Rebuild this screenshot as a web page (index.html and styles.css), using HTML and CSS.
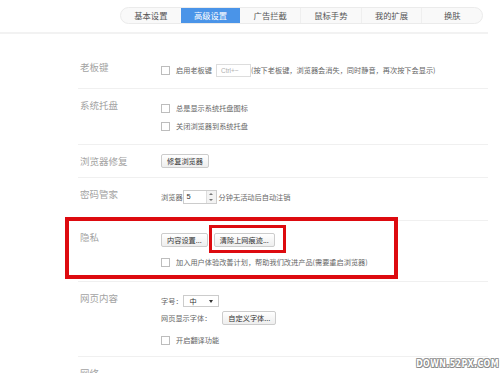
FILE: index.html
```html
<!DOCTYPE html>
<html lang="zh-CN">
<head>
    <meta charset="UTF-8">
    <meta name="viewport" content="width=device-width, initial-scale=1.0">
    <title>高级设置</title>
    <link rel="stylesheet" href="styles.css">
</head>
<body>
    <div class="header">
        <div class="tabs">
            <a href="#" class="tab">基本设置</a>
            <a href="#" class="tab active">高级设置</a>
            <a href="#" class="tab">广告拦截</a>
            <a href="#" class="tab">鼠标手势</a>
            <a href="#" class="tab">我的扩展</a>
            <a href="#" class="tab">换肤</a>
        </div>
    </div>

    <!-- 老板键 -->
    <div class="row row-first">
        <div class="label">老板键</div>
        <div class="content">
            <div class="line"><span class="check"></span>启用老板键<span class="hotkey">Ctrl+~</span>(按下老板键，浏览器会消失，同时静音，再次按下会显示)</div>
        </div>
    </div>

    <!-- 系统托盘 -->
    <div class="row row-tray">
        <div class="label">系统托盘</div>
        <div class="content">
            <div class="line"><span class="check"></span>总是显示系统托盘图标</div>
            <div class="line"><span class="check"></span>关闭浏览器到系统托盘</div>
        </div>
    </div>

    <!-- 浏览器修复 -->
    <div class="row">
        <div class="label">浏览器修复</div>
        <div class="content flush">
            <div class="line"><a href="#" class="button">修复浏览器</a></div>
        </div>
    </div>

    <!-- 密码管家 -->
    <div class="row row-pass">
        <div class="label">密码管家</div>
        <div class="content">
            <div class="line">浏览器<span class="spin"><span class="spin-value">5</span><span class="spin-arrows"><i class="up"></i><i class="down"></i></span></span><span class="after-spin">分钟无活动后自动注销</span></div>
        </div>
    </div>

    <!-- 隐私 -->
    <div class="row row-privacy">
        <div class="mark"></div>
        <div class="label">隐私</div>
        <div class="content">
            <div class="line">
                <a href="#" class="button">内容设置...</a>
                <span class="marked"><a href="#" class="button">清除上网痕迹...</a><span class="mark-inner"></span></span>
            </div>
            <div class="line spaced"><span class="check"></span>加入用户体验改善计划，帮助我们改进产品(需要重启浏览器)</div>
        </div>
    </div>

    <!-- 网页内容 -->
    <div class="row">
        <div class="label">网页内容</div>
        <div class="content">
            <div class="line">字号：<span class="select">中<i class="caret"></i></span></div>
            <div class="line tight">网页显示字体：<a href="#" class="button font-button">自定义字体...</a></div>
            <div class="line spaced"><span class="check"></span>开启翻译功能</div>
        </div>
    </div>

    <div class="row">
        <div class="label">网络</div>
        <div class="content"></div>
    </div>

    <div class="watermark">DOWN.52PX.COM</div>
</body>
</html>
```

FILE: styles.css
```css
html, body {
    margin: 0;
    padding: 0;
}

body {
    font-family: "Noto Sans CJK SC", "Noto Sans", sans-serif;
    background-color: #ffffff;
    color: #666666;
    height: 373px;
    overflow: hidden;
    position: relative;
}

a {
    text-decoration: none;
}

.header {
    width: 488px;
    height: 34px;
    box-sizing: border-box;
    padding: 7px 0 0 120px;
    border-bottom: 2px solid #f2f2f2;
}

.tabs {
    display: flex;
    width: 363px;
    height: 17px;
    box-sizing: border-box;
    border: 1px solid #ebebeb;
    border-radius: 9px;
    background-color: #f9f9f9;
    overflow: hidden;
}

.tab {
    flex: 1;
    font-size: 8.3px;
    line-height: 15px;
    text-align: center;
    color: #555555;
    border-left: 1px solid #efefef;
}

.tab:first-child {
    border-left: none;
}

.tab.active {
    background-color: #4a94e8;
    color: #ffffff;
    border-left: none;
}

.tab.active + .tab {
    border-left: none;
}

.row {
    display: flex;
    margin-left: 78px;
    width: 410px;
    padding: 9px 0;
    border-bottom: 1px solid #f0f0f0;
    position: relative;
}

.row-first {
    padding: 26px 0 11px;
}

.row-tray {
    padding-bottom: 11px;
}

.row-pass {
    padding-bottom: 16px;
}

.row-privacy {
    padding-bottom: 12px;
}

.label {
    width: 81px;
    padding-left: 2px;
    flex-shrink: 0;
    font-size: 9.5px;
    line-height: 14px;
    color: #a3a3a3;
}

.content {
    display: flex;
    flex-direction: column;
    gap: 4px;
    padding-top: 3px;
}

.content.flush {
    padding-top: 0;
}

.line {
    display: flex;
    align-items: center;
    height: 14px;
    font-size: 7.2px;
    white-space: nowrap;
    color: #666666;
}

.line.spaced {
    margin-top: 4px;
}

.line.tight {
    margin-top: -1px;
}

.check {
    width: 9px;
    height: 9px;
    box-sizing: border-box;
    border: 1px solid #bdbdbd;
    background-color: #ffffff;
    margin-right: 6px;
    flex-shrink: 0;
}

.hotkey {
    width: 35px;
    height: 13px;
    box-sizing: border-box;
    margin-left: 4px;
    padding-left: 4px;
    border: 1px solid #dddddd;
    font-family: "Liberation Sans", sans-serif;
    font-size: 6.5px;
    line-height: 11px;
    color: #b0b0b0;
}

.button {
    display: inline-block;
    height: 14px;
    box-sizing: border-box;
    padding: 0 5px;
    border: 1px solid #cccccc;
    border-radius: 2px;
    background: linear-gradient(#ffffff, #eeeeee);
    font-size: 7.2px;
    line-height: 12px;
    color: #333333;
}

.marked {
    position: relative;
    margin-left: 6px;
}

.font-button {
    margin-left: 11px;
}

.spin {
    display: flex;
    width: 34px;
    height: 14px;
    box-sizing: border-box;
    border: 1px solid #cccccc;
    background-color: #ffffff;
}

.spin-value {
    flex: 1;
    padding-left: 3px;
    font-family: "Liberation Sans", sans-serif;
    font-size: 7.5px;
    line-height: 12px;
    color: #333333;
}

.spin-arrows {
    width: 9px;
    display: flex;
    flex-direction: column;
    border-left: 1px solid #dddddd;
    background-color: #f3f3f3;
}

.spin-arrows i {
    flex: 1;
    display: flex;
    align-items: center;
    justify-content: center;
}

.spin-arrows .up::before {
    content: "";
    border: 2px solid transparent;
    border-bottom: 2px solid #777777;
    border-top: none;
}

.spin-arrows .down::before {
    content: "";
    border: 2px solid transparent;
    border-top: 2px solid #777777;
    border-bottom: none;
}

.after-spin {
    margin-left: 2px;
}

.select {
    position: relative;
    width: 36px;
    height: 12px;
    box-sizing: border-box;
    margin-left: 0;
    padding-left: 6px;
    border: 1px solid #cccccc;
    background-color: #ffffff;
    font-size: 7.2px;
    line-height: 10px;
    color: #333333;
}

.caret {
    position: absolute;
    right: 5px;
    top: 4px;
    border: 2.5px solid transparent;
    border-top: 3px solid #333333;
    border-bottom: none;
}

/* red annotation boxes */
.mark {
    position: absolute;
    left: -13px;
    top: -4px;
    width: 333px;
    height: 62px;
    box-sizing: border-box;
    border: 4px solid #dd0a0f;
    pointer-events: none;
}

.mark-inner {
    position: absolute;
    left: -5px;
    top: -8px;
    width: 77px;
    height: 28px;
    box-sizing: border-box;
    border: 3px solid #dd0a0f;
}

.watermark {
    position: absolute;
    right: 1px;
    bottom: 3px;
    font-family: "DejaVu Sans", sans-serif;
    font-weight: bold;
    font-size: 11px;
    letter-spacing: 0.5px;
    color: #ffffff;
    transform: scaleX(0.72);
    transform-origin: right bottom;
    text-shadow: 0 0 1px #6b6b6b, 1px 1px 0 #8a8a8a, -1px -1px 0 #9a9a9a, 1px -1px 0 #9a9a9a, -1px 1px 0 #9a9a9a;
}
```
